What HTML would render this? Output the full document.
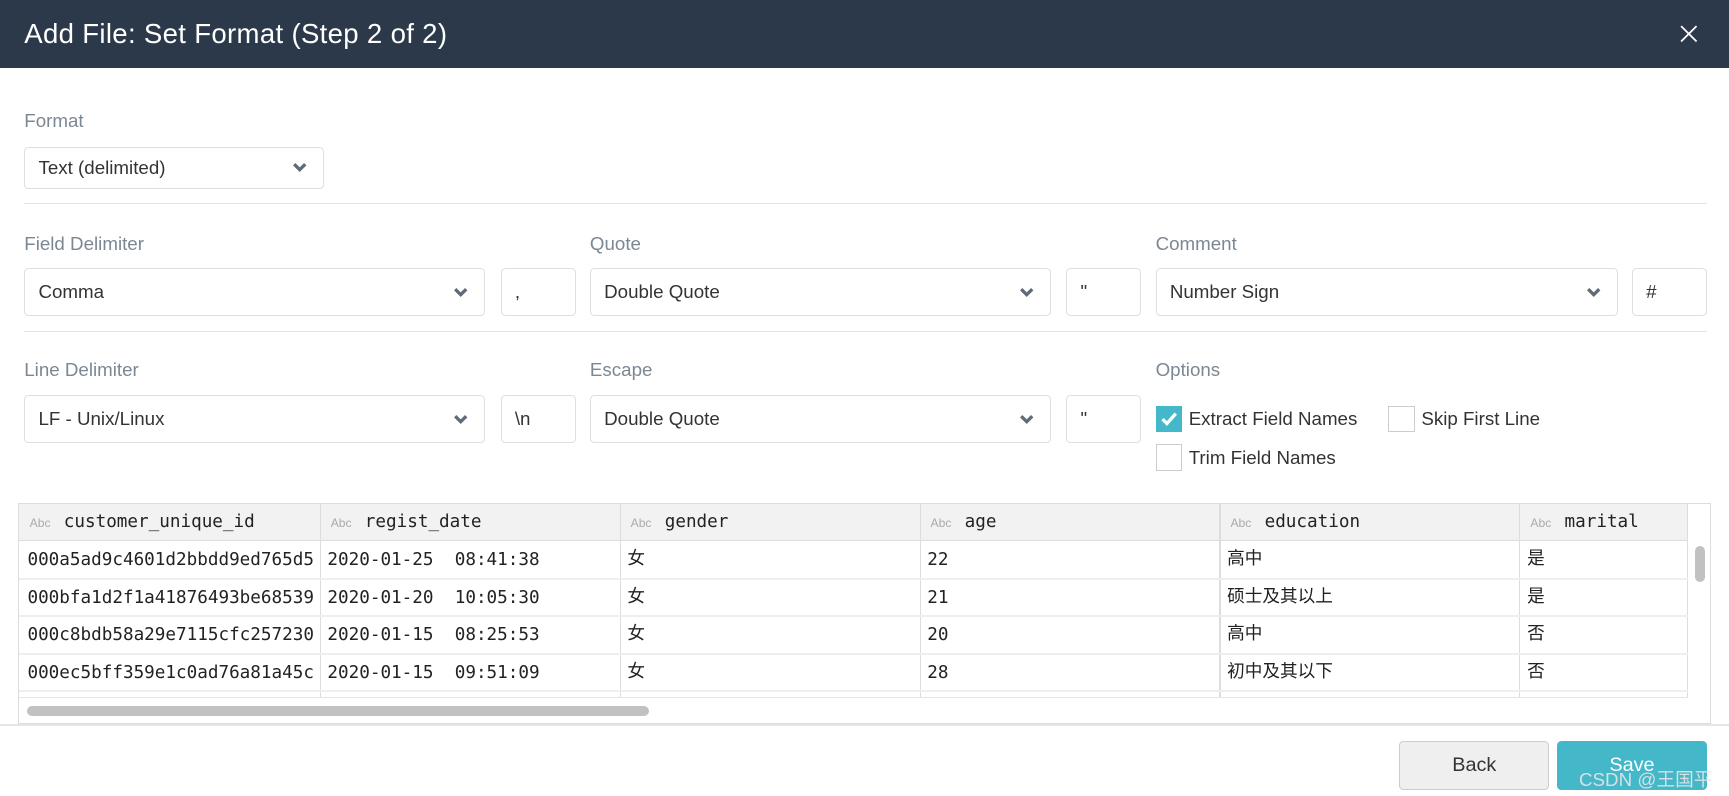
<!DOCTYPE html>
<html><head><meta charset="utf-8"><style>
*{box-sizing:border-box;margin:0;padding:0}
html,body{width:1729px;height:796px;overflow:hidden;background:#fff}
body{font-family:"Liberation Sans","Noto Sans CJK SC",sans-serif}
#w{zoom:1.10268;width:1568px;height:722px;position:relative;background:#fff}
.a{position:absolute}
.hdr{left:0;top:0;width:1568px;height:62px;background:#2b394a}
.ttl{left:22px;top:16px;color:#fff;font-size:25px;letter-spacing:0.3px}
.lbl{color:#7b8793;font-size:17px}
.sel{border:1px solid #dcdfe3;border-radius:4px;background:#fff;font-size:17px;color:#333;padding-left:12px;display:flex;align-items:center}
.sel svg{position:absolute;right:14px;top:50%;margin-top:-5px}
.hr{height:1px;background:#e3e5e8}
.cb{width:24px;height:24px;border:1px solid #ccc;background:#fff}
.ct{font-size:17px;color:#333}
.tbl{left:16px;top:456px;width:1536px;height:201px;border:1px solid #ddd;overflow:hidden}
.mono{font-family:"DejaVu Sans Mono","Liberation Mono","Noto Sans CJK SC",monospace;font-size:16px;color:#222}
.th{background:#f2f2f2;height:34px;border-bottom:1px solid #ddd}
.abc{font-size:11px;color:#aaa;font-family:"Liberation Sans",sans-serif;margin-right:12px}
.vl{width:1px;background:#ddd;top:0;height:175px}
.row{left:0;width:1514px;height:2px;background:#eee}
.btn{border-radius:4px;font-size:18px;display:flex;align-items:center;justify-content:center}
</style></head><body><div id="w">
<div class="a hdr"></div>
<div class="a ttl">Add File: Set Format (Step 2 of 2)</div>
<svg class="a" style="left:1524px;top:23px" width="16" height="16"><path d="M1 1L15 15M15 1L1 15" stroke="#fff" stroke-width="1.6"/></svg>

<div class="a lbl" style="left:22px;top:100px">Format</div>
<div class="a sel" style="left:22px;top:133px;width:272px;height:38px">Text (delimited)<svg width="14" height="10"><path d="M2 2L7 7L12 2" stroke="#5f6b78" stroke-width="3" fill="none"/></svg></div>
<div class="a hr" style="left:22px;top:184px;width:1526px"></div>

<div class="a lbl" style="left:22px;top:211px">Field Delimiter</div>
<div class="a lbl" style="left:535px;top:211px">Quote</div>
<div class="a lbl" style="left:1048px;top:211px">Comment</div>
<div class="a sel" style="left:22px;top:243px;width:418px;height:44px">Comma<svg width="14" height="10"><path d="M2 2L7 7L12 2" stroke="#5f6b78" stroke-width="3" fill="none"/></svg></div>
<div class="a sel" style="left:454px;top:243px;width:68px;height:44px">,</div>
<div class="a sel" style="left:535px;top:243px;width:418px;height:44px">Double Quote<svg width="14" height="10"><path d="M2 2L7 7L12 2" stroke="#5f6b78" stroke-width="3" fill="none"/></svg></div>
<div class="a sel" style="left:967px;top:243px;width:68px;height:44px">"</div>
<div class="a sel" style="left:1048px;top:243px;width:419px;height:44px">Number Sign<svg width="14" height="10"><path d="M2 2L7 7L12 2" stroke="#5f6b78" stroke-width="3" fill="none"/></svg></div>
<div class="a sel" style="left:1480px;top:243px;width:68px;height:44px">#</div>
<div class="a hr" style="left:22px;top:300px;width:1526px"></div>

<div class="a lbl" style="left:22px;top:326px">Line Delimiter</div>
<div class="a lbl" style="left:535px;top:326px">Escape</div>
<div class="a lbl" style="left:1048px;top:326px">Options</div>
<div class="a sel" style="left:22px;top:358px;width:418px;height:44px">LF - Unix/Linux<svg width="14" height="10"><path d="M2 2L7 7L12 2" stroke="#5f6b78" stroke-width="3" fill="none"/></svg></div>
<div class="a sel" style="left:454px;top:358px;width:68px;height:44px">\n</div>
<div class="a sel" style="left:535px;top:358px;width:418px;height:44px">Double Quote<svg width="14" height="10"><path d="M2 2L7 7L12 2" stroke="#5f6b78" stroke-width="3" fill="none"/></svg></div>
<div class="a sel" style="left:967px;top:358px;width:68px;height:44px">"</div>

<div class="a cb" style="left:1048px;top:368px;background:#44b8c9;border-color:#44b8c9"><svg width="22" height="22"><path d="M5 11L9 15L17 6" stroke="#fff" stroke-width="3" fill="none"/></svg></div>
<div class="a ct" style="left:1078px;top:370px">Extract Field Names</div>
<div class="a cb" style="left:1259px;top:368px"></div>
<div class="a ct" style="left:1289px;top:370px">Skip First Line</div>
<div class="a cb" style="left:1048px;top:403px"></div>
<div class="a ct" style="left:1078px;top:405px">Trim Field Names</div>

<div class="a tbl">
 <div class="a th" style="left:0;top:0;width:1514px"></div>
 <div class="a vl" style="left:273px"></div><div class="a vl" style="left:545px"></div><div class="a vl" style="left:817px"></div><div class="a vl" style="left:1089px"></div><div class="a vl" style="left:1361px"></div>
 <div class="a" style="left:1513px;top:0;width:1px;height:175px;background:#ddd"></div>
 <div class="a row" style="top:67px"></div><div class="a row" style="top:101px"></div><div class="a row" style="top:135px"></div><div class="a row" style="top:169px"></div>
 <div class="a mono" style="left:10px;top:7px"><span class="abc">Abc</span>customer_unique_id</div>
 <div class="a mono" style="left:283px;top:7px"><span class="abc">Abc</span>regist_date</div>
 <div class="a mono" style="left:555px;top:7px"><span class="abc">Abc</span>gender</div>
 <div class="a mono" style="left:827px;top:7px"><span class="abc">Abc</span>age</div>
 <div class="a mono" style="left:1099px;top:7px"><span class="abc">Abc</span>education</div>
 <div class="a mono" style="left:1371px;top:7px"><span class="abc">Abc</span>marital</div>
 <div class="a mono" style="left:8px;top:35px;line-height:34px;width:265px;overflow:hidden;white-space:nowrap">000a5ad9c4601d2bbdd9ed765d5<br>000bfa1d2f1a41876493be68539<br>000c8bdb58a29e7115cfc257230<br>000ec5bff359e1c0ad76a81a45c</div>
 <div class="a mono" style="left:280px;top:35px;line-height:34px;white-space:pre">2020-01-25  08:41:38
2020-01-20  10:05:30
2020-01-15  08:25:53
2020-01-15  09:51:09</div>
 <div class="a mono" style="left:552px;top:34px;line-height:34px">女<br>女<br>女<br>女</div>
 <div class="a mono" style="left:824px;top:35px;line-height:34px">22<br>21<br>20<br>28</div>
 <div class="a mono" style="left:1096px;top:34px;line-height:34px">高中<br>硕士及其以上<br>高中<br>初中及其以下</div>
 <div class="a mono" style="left:1368px;top:34px;line-height:34px">是<br>是<br>否<br>否</div>
 <div class="a" style="left:0;top:175px;width:1514px;height:26px;background:#fff;border-top:1px solid #e6e6e6"></div>
 <div class="a" style="left:8px;top:183px;width:564px;height:9px;border-radius:5px;background:#c1c1c1"></div>
 <div class="a" style="left:1520px;top:38px;width:9px;height:33px;border-radius:5px;background:#c1c1c1"></div>
</div>
<div class="a hr" style="left:0;top:657px;width:1568px"></div>

<div class="a btn" style="left:1269px;top:672px;width:136px;height:44px;background:#efefef;border:1px solid #ccc;color:#333">Back</div>
<div class="a btn" style="left:1412px;top:672px;width:136px;height:44px;background:#44b8c9;color:#fff">Save</div>
<div class="a" style="left:1432px;top:694px;font-size:17px;color:rgba(230,230,230,.9)">CSDN @王国平</div>
</div></body></html>
